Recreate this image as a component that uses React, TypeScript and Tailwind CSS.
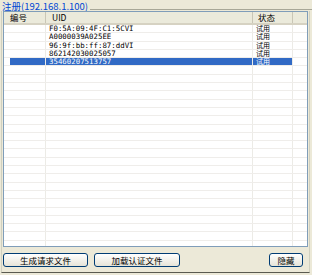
import React from 'react';

interface Entry {
  id: string;
  uid: string;
  status: string;
}

const entries: Entry[] = [
  { id: '', uid: 'F0:5A:09:4F:C1:5CVI', status: '试用' },
  { id: '', uid: 'A0000039A025EE', status: '试用' },
  { id: '', uid: '96:9f:bb:ff:87:ddVI', status: '试用' },
  { id: '', uid: '862142030025057', status: '试用' },
  { id: '', uid: '35460207513757', status: '试用' },
];

const SELECTED = 4;
const TOTAL_ROWS = 27;

const cjk = "font-['Noto_Sans_CJK_SC',sans-serif]";
const mono = "font-['DejaVu_Sans_Mono','Liberation_Mono',monospace]";

const XpButton: React.FC<{ label: string; className?: string }> = ({ label, className }) => (
  <button
    className={`h-[14px] rounded-[3px] border border-[#003c74] bg-gradient-to-b from-white to-[#e6e4d8] text-[8.5px] leading-none text-black ${cjk} ${className ?? ''}`}
  >
    {label}
  </button>
);

const ListRow: React.FC<{ entry?: Entry; selected: boolean }> = ({ entry, selected }) => (
  <div className="flex h-[8.3px] shrink-0 border-b border-[#efedea]">
    <div className="w-[42px] shrink-0 border-r border-[#ecebe6] pl-[3px]">
      {selected && <div className="ml-[3px] h-full bg-[#316ac5]" />}
    </div>
    <div className={`w-[207px] shrink-0 whitespace-nowrap border-r border-[#ecebe6] pl-[3px] text-[7.4px] leading-[7.5px] ${selected ? 'bg-[#316ac5] text-white' : 'text-black'} ${mono}`}>
      {entry?.uid}
    </div>
    <div className={`flex w-[40px] shrink-0 items-center whitespace-nowrap border-r border-[#ecebe6] pl-[3px] text-[7px] leading-[7px] ${selected ? 'bg-[#316ac5] text-white' : 'text-black'} ${cjk}`}>
      {entry?.status}
    </div>
    <div className="flex-1" />
  </div>
);

const App: React.FC = () => {
  const rows = Array.from({ length: TOTAL_ROWS }, (_, i) => entries[i]);

  return (
    <div className="flex h-[275px] w-[312px] flex-col overflow-hidden bg-[#ece9d8]">
      <div className="flex h-[11px] items-end pl-[2px]">
        <span className={`text-[9.5px] leading-[10px] text-[#0046d5] ${cjk}`}>注册(192.168.1.100)</span>
        <div className="mb-[1px] ml-[2px] h-px flex-1 bg-[#a8a797]" />
      </div>

      <div className="ml-[1px] mr-[2px] flex h-[262px] flex-col border-x border-b border-x-[#d0d0bf] border-b-[#5a5a50]">
        <div className="ml-[1px] mr-[1px] flex h-[236px] flex-col overflow-hidden border border-[#7f9db9] bg-white">
          <div className={`flex h-[13px] shrink-0 border-b-[2px] border-[#d6d2c2] bg-[#ebeadb] text-[8.5px] leading-[11px] text-black ${cjk}`}>
            <div className="w-[42px] shrink-0 border-r border-[#c9c6b6] pl-[6px]">编号</div>
            <div className="w-[207px] shrink-0 border-r border-[#c9c6b6] pl-[6px]">UID</div>
            <div className="w-[40px] shrink-0 border-r border-[#c9c6b6] pl-[5px]">状态</div>
            <div className="flex-1" />
          </div>
          {rows.map((entry, i) => (
            <ListRow key={i} entry={entry} selected={i === SELECTED} />
          ))}
        </div>

        <div className="mt-[6px] flex px-[1px]">
          <XpButton label="生成请求文件" className="w-[85px]" />
          <XpButton label="加载认证文件" className="ml-[6px] w-[86px]" />
          <div className="flex-1" />
          <XpButton label="隐藏" className="mr-[5px] w-[34px]" />
        </div>
      </div>
    </div>
  );
};

export default App;
